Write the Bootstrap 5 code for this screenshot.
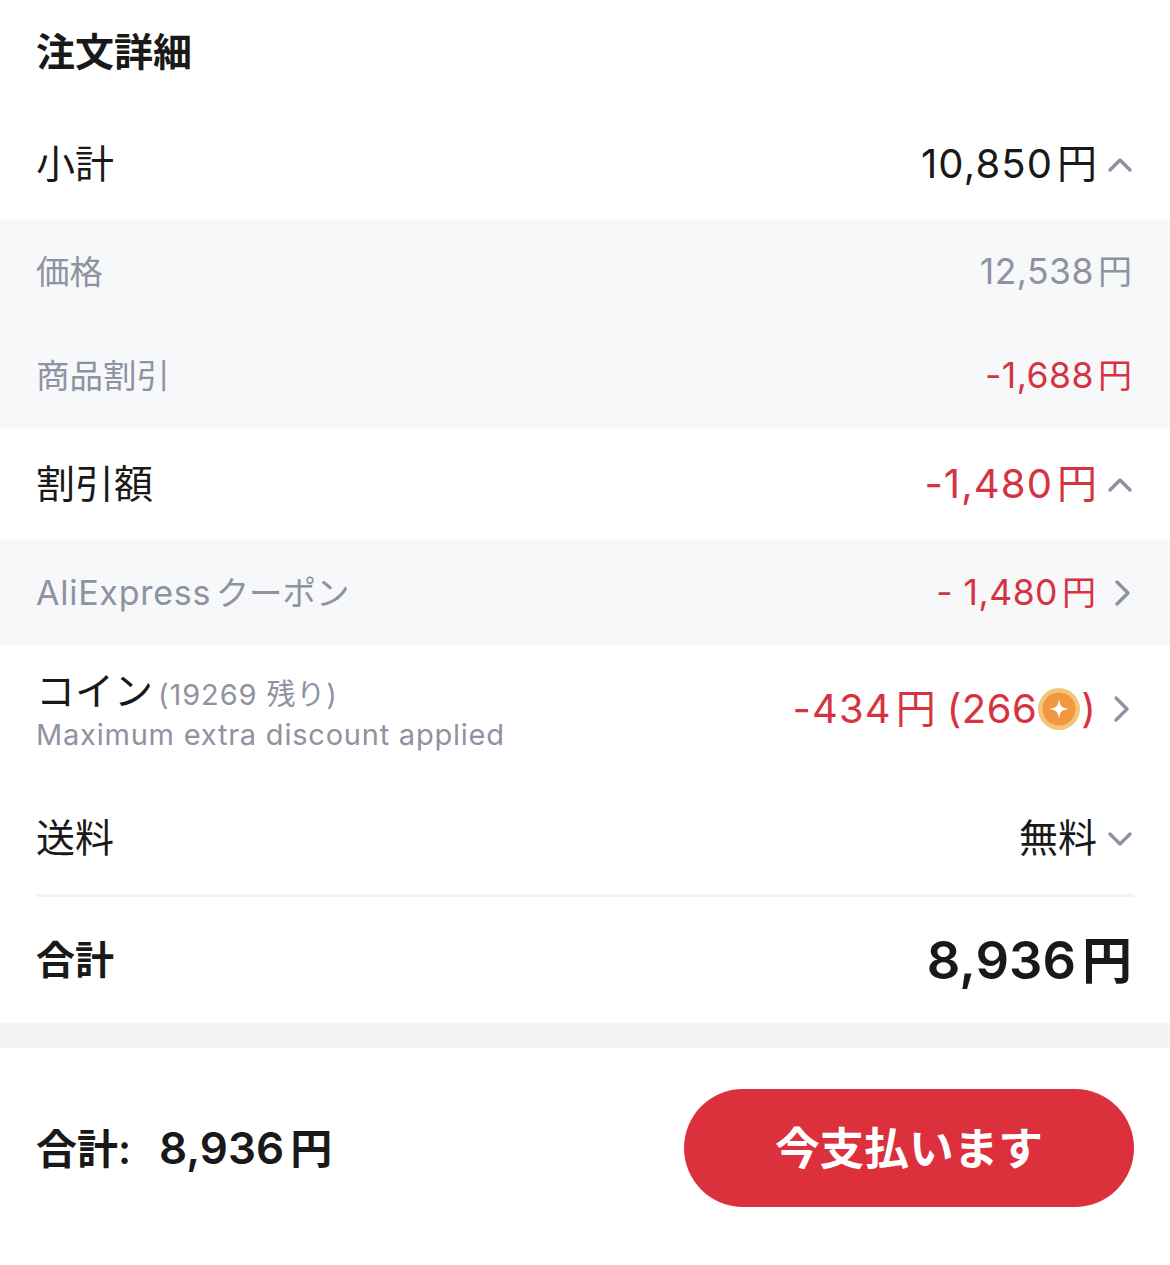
<!DOCTYPE html>
<html lang="ja"><head><meta charset="utf-8">
<link href="https://cdn.jsdelivr.net/npm/bootstrap@5.3.0/dist/css/bootstrap.min.css" rel="stylesheet">
<style>
html,body{background:#fff}
body{font-family:Inter,"Noto Sans CJK JP",sans-serif;color:#191919;width:1170px;height:1265px;overflow:hidden}
.ttl{height:108px;padding:28px 36px 0;font-size:39px;font-weight:700;line-height:48px}
.rw{padding:0 36px;display:flex;justify-content:space-between;align-items:center}
.r1{height:112px;font-size:39px}
.num{font-size:40px;letter-spacing:1.1px}
.yen{margin-left:4px;font-size:40px}
.sub{background:#f7f8fa;color:#8f92a1;font-size:33.500px}
.sub .rw{padding-right:38px}
.sub .num{font-size:35.500px;letter-spacing:.5px}
.sub .yen{font-size:34px}
.lat{letter-spacing:.75px;font-size:34px}
.kana{margin-left:-5px}
.r2{height:104px}
.r3{height:105px}
.red{color:#d63342}
.val{display:flex;align-items:center;gap:9px}
.chev{width:28px;height:28px;fill:none;stroke:#8f92a1;stroke-width:3.4;stroke-linecap:round;stroke-linejoin:round}
.sub .val{margin-right:-4px;gap:12px}
.coin{height:138px;padding-bottom:10px;font-size:39px}
.coinleft{margin-top:2px}
.coinhd{line-height:46px}
.coinmeta{font-size:29px;color:#8f92a1;letter-spacing:.9px;margin-left:-6px}
.cointxt{font-size:29px;color:#8f92a1;line-height:34px;letter-spacing:.78px}
.coinval{display:flex;align-items:center}
.coinval .open{margin-left:11px;letter-spacing:.5px}
.coinicon{width:44px;height:44px}
.ship{height:111px;font-size:39px}
.rule{height:3px;background:#f2f2f2;margin:0 36px}
.tot{height:126px;font-size:39px;font-weight:700}
.totv{font-weight:600;margin-right:2px}
.totv .yen{margin-left:6px;font-size:50px}
.totv .num{letter-spacing:0;font-size:52.500px}
.band{height:25px;background:#f4f4f4}
.foot{height:200px;font-size:41px;font-weight:600}
.foot .amt{margin-left:28px;font-size:44px}
.foot .yen{margin-left:6px;font-size:42px}
.pay{width:450px;height:118px;border-radius:59px;background:#dd303d;color:#fff;font-size:44.700px;font-weight:600;border:0;padding:4px 0 0}
.pay:hover{background:#dd303d;color:#fff}
</style></head><body>
<div class="ttl">注文詳細</div>
<div class="rw r1"><span>小計</span><span class="val"><span><span class="num">10,850</span><span class="yen">円</span></span><svg class="chev" viewBox="0 0 28 28"><path d="M4 20 14 10l10 10"/></svg></span></div>
<div class="sub">
<div class="rw r2"><span>価格</span><span><span class="num">12,538</span><span class="yen">円</span></span></div>
<div class="rw r2"><span>商品割引</span><span class="red"><span class="num">-1,688</span><span class="yen">円</span></span></div>
</div>
<div class="rw r1"><span>割引額</span><span class="val red"><span><span class="num">-1,480</span><span class="yen">円</span></span><svg class="chev" viewBox="0 0 28 28"><path d="M4 20 14 10l10 10"/></svg></span></div>
<div class="sub"><div class="rw r3"><span><span class="lat">AliExpress</span> <span class="kana">クーポン</span></span><span class="val red"><span><span class="num">- 1,480</span><span class="yen">円</span></span><svg class="chev" viewBox="0 0 28 28"><path d="M9 3l11 11L9 25"/></svg></span></div></div>
<div class="rw coin"><div class="coinleft"><div class="coinhd">コイン <span class="coinmeta">(19269 残り)</span></div><div class="cointxt">Maximum extra discount applied</div></div>
<span class="val red"><span class="coinval"><span class="num">-434</span><span class="yen">円</span><span class="num open">(266</span><svg class="coinicon" viewBox="0 0 44 44"><circle cx="22" cy="22" r="21" fill="#f2c578"/><circle cx="22" cy="22" r="16.5" fill="#f0983f"/><path d="M22 12c1 7.500 2.500 9 10 10-7.500 1-9 2.500-10 10-1-7.500-2.500-9-10-10 7.500-1 9-2.500 10-10z" fill="#fff"/></svg><span class="num">)</span></span><svg class="chev" viewBox="0 0 28 28"><path d="M10 3l11 11L10 25"/></svg></span></div>
<div class="rw ship"><span>送料</span><span class="val">無料<svg class="chev" viewBox="0 0 28 28"><path d="M4 9l10 10L24 9"/></svg></span></div>
<div class="rule"></div>
<div class="rw tot"><span>合計</span><span class="totv"><span class="num">8,936</span><span class="yen">円</span></span></div>
<div class="band"></div>
<div class="rw foot"><span>合計:<span class="amt">8,936</span><span class="yen">円</span></span><button class="btn pay">今支払います</button></div>
</body></html>
